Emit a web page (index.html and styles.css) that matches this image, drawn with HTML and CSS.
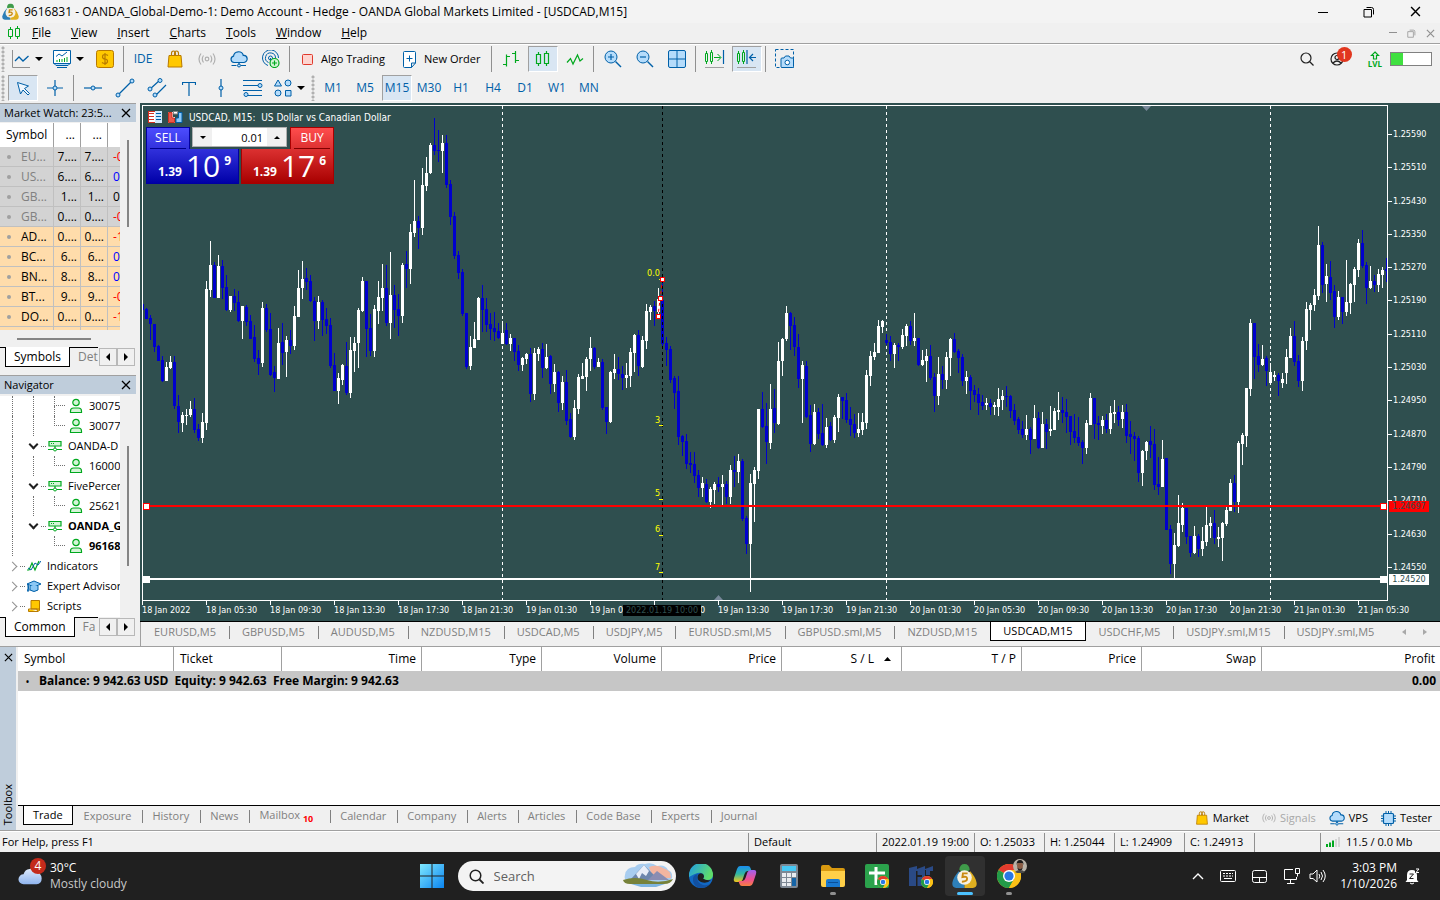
FILE: index.html
```html
<!DOCTYPE html>
<html lang="en">
<head>
    <meta charset="UTF-8">
    <meta name="viewport" content="width=device-width, initial-scale=1.0">
    <title>9616831 - OANDA_Global-Demo-1: Demo Account - Hedge</title>
    <link rel="stylesheet" href="styles.css">
</head>
<body>

    <!-- Icons used more than once -->
    <svg class="sprite" aria-hidden="true">
        <symbol id="i-down" viewBox="0 0 8 4"><path d="M0 0h8L4 4z" fill="#000"/></symbol>
        <symbol id="i-bag" viewBox="0 0 18 18"><path d="M5.500 6V3.500Q5.500 1 7.500 1t2 2.500V6M8.500 6V3.500Q8.500 1 10.500 1t2 2.500V6" fill="none" stroke="#b87a00" stroke-width="1.200"/><path d="M3 5.500h12l1 11.500H2z" fill="#ffc800" stroke="#b87a00"/></symbol>
        <symbol id="i-signal" viewBox="0 0 18 18"><g fill="none" stroke="#b0b0b0" stroke-width="1.200"><circle cx="9" cy="9" r="1.800"/><path d="M5.500 5.500q-2.500 3.500 0 7M12.500 5.500q2.500 3.500 0 7M3 3.500q-4 5.500 0 11M15 3.500q4 5.500 0 11"/></g></symbol>
        <symbol id="i-cloud" viewBox="0 0 18 18"><path d="M4 12.500a3.200 3.200 0 0 1-.5-6.300 5 5 0 0 1 9.800-.7 3.500 3.500 0 0 1 .7 7z" fill="#b5dcfb" stroke="#0060a8" stroke-width="1.200"/><path d="M9 12.500v2M1.500 15.500h5M11 15.500h5" stroke="#0060a8" stroke-width="1.200"/><circle cx="9" cy="15.500" r="1.500" fill="#b5dcfb" stroke="#0060a8"/></symbol>
        <symbol id="i-user" viewBox="0 0 14 16"><g fill="#d5f5d8" stroke="#00a81e" stroke-width="1.200"><circle cx="7" cy="4.500" r="3.200"/><path d="M1.500 14.500v-1.500q0-3 3-3h5q3 0 3 3v1.500z"/></g></symbol>
        <symbol id="i-server" viewBox="0 0 14 12"><path d="M1 1.500h12v4.500H1z" fill="#d5f5d8" stroke="#00a81e" stroke-width="1.200"/><path d="M3 3.500h1M5 3.500h1M0 9.500h5.500M8.500 9.500H14M7 6v2" stroke="#00a81e" stroke-width="1.200"/><circle cx="7" cy="9.500" r="1.500" fill="#fff" stroke="#00a81e"/></symbol>
        <symbol id="i-x" viewBox="0 0 10 10"><path d="M1 1l8 8M9 1L1 9" stroke="currentColor" stroke-width="1.300" fill="none"/></symbol>
        <symbol id="i-restore" viewBox="0 0 12 12"><path d="M1 3.500h7.500v7.500H1zM3.500 1.500h5q2 0 2 2v5" fill="none" stroke="currentColor"/></symbol>
        <symbol id="i-chrome" viewBox="0 0 24 24"><circle cx="12" cy="12" r="12" fill="#fbc116"/><path d="M12 12L1.600 6A12 12 0 0 1 22.400 6z" fill="#e33b2e"/><path d="M12 12L1.600 6A12 12 0 0 0 12 24l5-9z" fill="#229b48"/><path d="M12 6h10.400A12 12 0 0 1 12 24l5.200-9z" fill="#fbc116"/><circle cx="12" cy="12" r="6" fill="#fff"/><circle cx="12" cy="12" r="4.600" fill="#2a78e4"/></symbol>
        <symbol id="i-mt5" viewBox="0 0 24 24"><path d="M12 0q4.500 0 5 5.500l-5 5-5-5Q7.500 0 12 0z" fill="#3f9b4a"/><path d="M6.500 7l5.500 5v11H4q-4.500-.5-3.500-5.500T6.500 7z" fill="#2d7fb8"/><path d="M17.500 7L12 12v11h8q4.500-.5 3.500-5.500T17.500 7z" fill="#e0b020"/><circle cx="12" cy="13" r="7" fill="#f6f1e2"/><path d="M15 9h-4.500l-.5 3.500q4.500-1 4.500 1.700T9.500 17" fill="none" stroke="#c98a10" stroke-width="1.800"/></symbol>
    </svg>

    <header class="titlebar">
        <svg class="app-icon" viewBox="0 0 24 24"><use href="#i-mt5"/></svg>
        <h1>9616831 - OANDA_Global-Demo-1: Demo Account - Hedge - OANDA Global Markets Limited - [USDCAD,M15]</h1>
        <div class="win-buttons">
            <button aria-label="Minimize"><svg width="12" height="12"><path d="M1 6.500h10" stroke="#000"/></svg></button>
            <button aria-label="Restore"><svg width="12" height="12"><use href="#i-restore"/></svg></button>
            <button aria-label="Close"><svg width="11" height="11"><use href="#i-x"/></svg></button>
        </div>
    </header>

    <nav class="menubar">
        <svg width="12" height="14" viewBox="0 0 12 14"><path d="M.5 3.500h4v7h-4zM2.500 1v2.500M2.500 10.500V13M7.500 2.500h4v8h-4zM9.500 0v2.500M9.500 10.500V13" fill="none" stroke="#00a81e"/></svg>
        <button><u>F</u>ile</button>
        <button><u>V</u>iew</button>
        <button><u>I</u>nsert</button>
        <button><u>C</u>harts</button>
        <button><u>T</u>ools</button>
        <button><u>W</u>indow</button>
        <button><u>H</u>elp</button>
        <div class="child-buttons">
            <button aria-label="Minimize chart"><svg width="10" height="10"><path d="M1 4.500h8" stroke="currentColor"/></svg></button>
            <button aria-label="Restore chart"><svg width="9" height="9"><use href="#i-restore"/></svg></button>
            <button aria-label="Close chart"><svg width="9" height="9"><use href="#i-x"/></svg></button>
        </div>
    </nav>

    <div class="toolbars">
        <div class="toolbar">
            <i class="grip"></i>
            <button class="tool combo" aria-label="Chart"><svg width="18" height="18"><path d="M.5 0v17.500H18" fill="none" stroke="#909090"/><path d="M3 11l4-4 4 4 5.500-5" fill="none" stroke="#0060a8" stroke-width="1.300"/></svg><svg width="8" height="4"><use href="#i-down"/></svg></button>
            <button class="tool combo" aria-label="Templates"><svg width="18" height="18"><path d="M.5.500h17v13H.5z" fill="#fff" stroke="#0060a8"/><path d="M1 13.500h16l-2 2H3zM4 17.500h10" fill="#b5dcfb" stroke="#0060a8"/><path d="M3 6.500l3-2.500 3 2 5-4" fill="none" stroke="#0060a8"/><path d="M4 12v-2M6.500 12V9M9 12v-3M11.500 12V8M14 12V7" stroke="#00a81e"/></svg><svg width="8" height="4"><use href="#i-down"/></svg></button>
            <button class="tool" aria-label="Symbols"><svg width="18" height="18"><rect x=".5" y=".5" width="17" height="17" rx="2" fill="#ffc800" stroke="#b87a00"/><path d="M12 5.500Q10.500 4.500 9 4.500 6.500 4.500 6.500 6.700T9 9t2.500 2.300T9 13.500q-1.800 0-3-1M9 3v12" fill="none" stroke="#b87a00" stroke-width="1.200"/></svg></button>
            <i class="sep"></i>
            <button class="tool tf">IDE</button>
            <button class="tool" aria-label="Market"><svg width="18" height="18"><use href="#i-bag"/></svg></button>
            <button class="tool" aria-label="Signals"><svg width="18" height="18"><use href="#i-signal"/></svg></button>
            <button class="tool" aria-label="VPS"><svg width="18" height="18"><use href="#i-cloud"/></svg></button>
            <button class="tool" aria-label="Network"><svg width="18" height="18"><g fill="none" stroke="#0060a8"><path d="M6 15.500A8 8 0 1 1 16.500 8"/><path d="M6.500 12.500A5 5 0 1 1 13.500 8"/><circle cx="8.500" cy="8" r="2"/></g><path d="M8.500 8v8" stroke="#0060a8"/><circle cx="12.500" cy="13" r="4.500" fill="#d5f5d8" stroke="#00a81e" stroke-width="1.200"/><path d="M12.500 10.500v5M10 13h5" stroke="#00a81e" stroke-width="1.200"/></svg></button>
            <i class="sep"></i>
            <button class="tool wide"><svg width="11" height="11"><rect x=".5" y=".5" width="10" height="10" rx="1" fill="#fdd5d0" stroke="#e0392b"/></svg>Algo Trading</button>
            <button class="tool wide"><svg width="13" height="17"><path d="M1.500.5h10q1 0 1 1V12L8.500 16.500h-7q-1 0-1-1v-14q0-1 1-1zM12.500 12h-4v4.500" fill="#fff" stroke="#0060a8"/><path d="M6.500 4.500v6M3.500 7.500h6" stroke="#0060a8"/></svg>New Order</button>
            <i class="sep"></i>
            <button class="tool" aria-label="Bar chart"><svg width="18" height="18"><path d="M4.500 4.500v12M1 14.500h3.500M4.500 6.500H8M13.500 1v12M10 3.500h3.500M13.500 10.500H17" stroke="#00a81e" stroke-width="1.200" fill="none"/></svg></button>
            <button class="tool on" aria-label="Candlesticks"><svg width="16" height="18"><path d="M1.500 4.500h4v9h-4zM3.500 2v2.500M3.500 13.500V16M9.500 3.500h4v10h-4zM11.500 1v2.500M11.500 13.500V16" fill="none" stroke="#00a81e" stroke-width="1.200"/></svg></button>
            <button class="tool" aria-label="Line chart"><svg width="18" height="18"><path d="M1 12.500l3.500-4L7 14l4.500-9 2.500 6 3-2.500" fill="none" stroke="#00a81e" stroke-width="1.200"/></svg></button>
            <i class="sep"></i>
            <button class="tool" aria-label="Zoom in"><svg width="18" height="18"><circle cx="7" cy="7" r="6" fill="#b5dcfb" stroke="#0060a8"/><path d="M4 7h6M7 4v6" stroke="#0060a8" stroke-width="1.200"/><path d="M11.500 11.500l5.500 5.500" stroke="#0060a8" stroke-width="1.400"/></svg></button>
            <button class="tool" aria-label="Zoom out"><svg width="18" height="18"><circle cx="7" cy="7" r="6" fill="#b5dcfb" stroke="#0060a8"/><path d="M4 7h6" stroke="#0060a8" stroke-width="1.200"/><path d="M11.500 11.500l5.500 5.500" stroke="#0060a8" stroke-width="1.400"/></svg></button>
            <button class="tool" aria-label="Tile windows"><svg width="18" height="18"><rect x=".5" y=".5" width="17" height="17" rx="1.500" fill="#b5dcfb" stroke="#0060a8"/><path d="M9 1v16M1 9h16" stroke="#0060a8"/></svg></button>
            <i class="sep"></i>
            <button class="tool" aria-label="Auto scroll"><svg width="20" height="20"><path d="M.5 4.500h2v8h-2zM1.500 2v2.500M1.500 12.500V15M5.500 3.500h2v9h-2zM6.500 1v2.500M6.500 12.500V15M9 8.500h6.500M12.500 5l3.500 3.500L12.500 12" fill="none" stroke="#00a81e"/><path d="M18.500 1v14" stroke="#0060a8" stroke-width="1.200"/><path d="M0 18.500h19" stroke="#a0a0a0"/></svg></button>
            <button class="tool on" aria-label="Chart shift"><svg width="20" height="20"><path d="M.5 4.500h2v8h-2zM1.500 2v2.500M1.500 12.500V15M5.500 3.500h2v9h-2zM6.500 1v2.500M6.500 12.500V15" fill="none" stroke="#00a81e"/><path d="M10 1v14M19 8.500h-6.500M16 5l-3.500 3.500L16 12" fill="none" stroke="#0060a8" stroke-width="1.200"/><path d="M0 18.500h19" stroke="#a0a0a0"/></svg></button>
            <i class="sep"></i>
            <button class="tool" aria-label="Screenshot"><svg width="20" height="20"><rect x=".5" y=".5" width="18" height="18" fill="none" stroke="#0060a8" stroke-dasharray="3 2"/><path d="M6 10q0-1 1-1h2l1.500-2h3.500l1.500 2h2q1 0 1 1v7.500q0 1-1 1H7q-1 0-1-1z" fill="#b5dcfb" stroke="#0060a8"/><circle cx="12.300" cy="13.500" r="2.300" fill="#fff" stroke="#0060a8"/></svg></button>
            <div class="account">
                <button aria-label="Search"><svg width="14" height="14"><circle cx="6" cy="6" r="5" fill="none" stroke="#202020" stroke-width="1.200"/><path d="M9.500 9.500L13.500 13.500" stroke="#202020" stroke-width="1.200"/></svg></button>
                <button class="profile" aria-label="Profile"><svg width="14" height="14"><g fill="none" stroke="#202020" stroke-width="1.200"><circle cx="7" cy="7" r="6"/><circle cx="7" cy="5.500" r="2"/><path d="M3 11q4-4 8 0"/></g></svg><span class="badge">1</span></button>
                <button class="lvl" aria-label="Level"><svg width="10" height="9"><path d="M5 1l3.500 3.500h-2v3.500h-3V4.500h-2z" fill="none" stroke="#00a81e" stroke-width="1.200"/></svg><span>LVL</span></button>
                <div class="meter"><i></i></div>
            </div>
        </div>
        <div class="toolbar">
            <i class="grip"></i>
            <button class="tool on" aria-label="Cursor"><svg width="18" height="18"><path d="M3.500 3.500l11 3.500-4 2.500 5 5-1.500 1.500-5-5L6.500 15z" fill="#eef6fd" stroke="#0060a8"/></svg></button>
            <button class="tool" aria-label="Crosshair"><svg width="18" height="18"><path d="M9 1v6M9 11v6M1 9h6M11 9h6" stroke="#0060a8" stroke-width="1.200"/><circle cx="9" cy="9" r="2" fill="#b5dcfb" stroke="#0060a8"/></svg></button>
            <i class="sep"></i>
            <button class="tool" aria-label="Horizontal line"><svg width="18" height="18"><path d="M0 9h18" stroke="#0060a8" stroke-width="1.200"/><circle cx="9" cy="9" r="2" fill="#b5dcfb" stroke="#0060a8"/></svg></button>
            <button class="tool" aria-label="Trendline"><svg width="20" height="20"><path d="M2 18L18 2" stroke="#0060a8" stroke-width="1.200"/><g fill="#b5dcfb" stroke="#0060a8"><circle cx="3" cy="17" r="2"/><circle cx="17" cy="3" r="2"/></g></svg></button>
            <button class="tool" aria-label="Channel"><svg width="20" height="20"><path d="M2 12L13 2M8 18L19 7" stroke="#0060a8" stroke-width="1.200"/><g fill="#b5dcfb" stroke="#0060a8"><circle cx="3" cy="11" r="2"/><circle cx="13" cy="2.500" r="2"/><circle cx="8" cy="17" r="2"/></g></svg></button>
            <button class="tool" aria-label="Text"><svg width="14" height="15"><path d="M.5 4V1.500h13V4M7 1.500V15" fill="none" stroke="#0060a8" stroke-width="1.200"/></svg></button>
            <button class="tool" aria-label="Vertical line"><svg width="18" height="18"><path d="M9 0v18" stroke="#0060a8" stroke-width="1.200"/><circle cx="9" cy="9" r="2" fill="#b5dcfb" stroke="#0060a8"/></svg></button>
            <button class="tool" aria-label="Fibonacci"><svg width="20" height="18"><path d="M0 1.500h19M0 6.500h16M0 11.500h19M3 16.500h16" stroke="#0060a8"/><g fill="#b5dcfb" stroke="#0060a8"><circle cx="17" cy="6.500" r="2"/><circle cx="3" cy="15.500" r="2"/></g></svg></button>
            <button class="tool combo" aria-label="Shapes"><svg width="18" height="18"><g fill="#b5dcfb" stroke="#0060a8"><path d="M4 1l3.500 6h-7z"/><circle cx="14" cy="4" r="3"/><circle cx="4" cy="14" r="3"/><path d="M11.500 11.500h5.500v5.500h-5.500z"/></g></svg><svg width="8" height="4"><use href="#i-down"/></svg></button>
            <i class="grip"></i>
            <button class="tool tf">M1</button>
            <button class="tool tf">M5</button>
            <button class="tool tf on">M15</button>
            <button class="tool tf">M30</button>
            <button class="tool tf">H1</button>
            <button class="tool tf">H4</button>
            <button class="tool tf">D1</button>
            <button class="tool tf">W1</button>
            <button class="tool tf">MN</button>
        </div>
    </div>

    <main class="workspace">
        <aside class="dock">
            <section class="panel watch">
                <h2>Market Watch: 23:5...<button aria-label="Close Market Watch"><svg width="10" height="10"><use href="#i-x"/></svg></button></h2>
                <div class="scroll">
                    <div class="view">
                        <table>
                            <colgroup><col class="c-name"><col class="c-num"><col class="c-num"><col class="c-num"></colgroup>
                            <thead><tr><th>Symbol</th><th>...</th><th>...</th><th></th></tr></thead>
                            <tbody>
                                <tr class="off"><td>EU...</td><td>7....</td><td>7....</td><td class="neg">-0</td></tr>
                                <tr class="off"><td>US...</td><td>6....</td><td>6....</td><td class="pos">0</td></tr>
                                <tr class="off"><td>GB...</td><td>1...</td><td>1...</td><td>0</td></tr>
                                <tr class="off"><td>GB...</td><td>0....</td><td>0....</td><td class="neg">-0</td></tr>
                                <tr><td>AD...</td><td>0....</td><td>0....</td><td class="neg">-1</td></tr>
                                <tr><td>BC...</td><td>6...</td><td>6...</td><td class="pos">0</td></tr>
                                <tr><td>BN...</td><td>8...</td><td>8...</td><td class="pos">0</td></tr>
                                <tr><td>BT...</td><td>9...</td><td>9...</td><td class="neg">-0</td></tr>
                                <tr><td>DO...</td><td>0....</td><td>0....</td><td class="neg">-1</td></tr>
                                <tr class="more"><td></td><td></td><td></td><td></td></tr>
                            </tbody>
                        </table>
                    </div>
                    <i class="bar"></i>
                </div>
                <i class="hbar"></i>
                <div class="dock-tabs">
                    <button class="active">Symbols</button><button>Det</button>
                    <span class="arrows"><button aria-label="Previous"><svg width="4" height="8"><path d="M4 0v8L0 4z"/></svg></button><button aria-label="Next"><svg width="4" height="8"><path d="M0 0v8l4-4z"/></svg></button></span>
                </div>
            </section>

            <section class="panel navigator">
                <h2>Navigator<button aria-label="Close Navigator"><svg width="10" height="10"><use href="#i-x"/></svg></button></h2>
                <div class="scroll">
                    <ul class="view tree">
                        <li><i class="g line"></i><i class="g line"></i><i class="b through"></i><svg width="14" height="16"><use href="#i-user"/></svg><span>30075</span></li>
                        <li><i class="g line"></i><i class="g line"></i><i class="b"></i><svg width="14" height="16"><use href="#i-user"/></svg><span>30077</span></li>
                        <li><i class="g line"></i><i class="chev open"></i><i class="d"></i><svg width="14" height="12"><use href="#i-server"/></svg><span>OANDA-D</span></li>
                        <li><i class="g line"></i><i class="g line"></i><i class="b"></i><svg width="14" height="16"><use href="#i-user"/></svg><span>16000</span></li>
                        <li><i class="g line"></i><i class="chev open"></i><i class="d"></i><svg width="14" height="12"><use href="#i-server"/></svg><span>FivePercent</span></li>
                        <li><i class="g line"></i><i class="g line"></i><i class="b"></i><svg width="14" height="16"><use href="#i-user"/></svg><span>25621</span></li>
                        <li class="bold"><i class="g line"></i><i class="chev open"></i><i class="d"></i><svg width="14" height="12"><use href="#i-server"/></svg><span>OANDA_G</span></li>
                        <li class="bold"><i class="g line"></i><i class="g"></i><i class="b"></i><svg width="14" height="16"><use href="#i-user"/></svg><span>96168</span></li>
                        <li><i class="chev"></i><i class="d"></i><svg width="14" height="14"><path d="M0 11h2l3-7 3 7 4-9" fill="none" stroke="#00a81e" stroke-width="1.200"/><path d="M1 9l3 2 4-7 3 2 3-4" fill="none" stroke="#0060a8"/></svg><span>Indicators</span></li>
                        <li><i class="chev"></i><i class="d"></i><svg width="14" height="14"><path d="M0 5l7-3 7 3-7 3z" fill="#8cc8f5" stroke="#0060a8"/><path d="M3 7v4q4 3 8 0V7M1 5v5l-1 2h2z" fill="#8cc8f5" stroke="#0060a8"/></svg><span>Expert Advisors</span></li>
                        <li><i class="chev"></i><i class="d"></i><svg width="14" height="14"><path d="M4 1.500h8.500V10H4zM1.500 10H10v1.500q1 1.500 2.500 0V10M1.500 10v2.500h9.500" fill="#ffc800" stroke="#b87a00"/></svg><span>Scripts</span></li>
                    </ul>
                    <i class="bar"></i>
                </div>
                <div class="dock-tabs">
                    <button class="active">Common</button><button>Fa</button>
                    <span class="arrows"><button aria-label="Previous"><svg width="4" height="8"><path d="M4 0v8L0 4z"/></svg></button><button aria-label="Next"><svg width="4" height="8"><path d="M0 0v8l4-4z"/></svg></button></span>
                </div>
            </section>
        </aside>

        <section class="charts">
            <div class="chart">
                <div class="plot">
                    <svg id="plot" width="100%" height="100%"></svg>
                    <div class="caption">
                        <svg width="14" height="12"><path d="M0 0h7v12H0z" fill="#fff"/><path d="M7 0h7v12H7z" fill="#cfe8fb"/><path d="M1 2.500h5M1 5.500h5M1 8.500h5" stroke="#d03020"/><path d="M8 2.500h5M8 5.500h5M8 8.500h5" stroke="#0060a8"/><path d="M.5.5H7M.5 11.500H7M.5 0v12" fill="none" stroke="#d03020"/></svg>
                        <svg width="15" height="12"><path d="M0 1h5v5h2v6H0z" fill="#fff"/><path d="M.5 1.500H4V7h2.500v4.500h-6z" fill="#e8594c" stroke="#d03020"/><path d="M8 7h2.500V1.500H14v10H8z" fill="#8cc8f5" stroke="#0060a8"/><path d="M5.500.5h4V3h-4z" fill="#fff" stroke="#888"/></svg>
                        <span>USDCAD, M15:&nbsp; US Dollar vs Canadian Dollar</span>
                    </div>
                    <div class="deal">
                        <button class="side sell"><span class="name">SELL</span><span class="price"><b>1.39</b><big>10</big><sup>9</sup></span></button>
                        <button class="side buy"><span class="name">BUY</span><span class="price"><b>1.39</b><big>17</big><sup>6</sup></span></button>
                        <div class="volume">
                            <button aria-label="Decrease"><svg width="6" height="3"><path d="M0 0h6L3 3z"/></svg></button>
                            <input type="text" value="0.01" aria-label="Volume">
                            <button aria-label="Increase"><svg width="6" height="3"><path d="M0 3h6L3 0z"/></svg></button>
                        </div>
                    </div>
                </div>
                <ol class="price-axis" id="prices"></ol>
                <span class="mark red">1.24697</span>
                <span class="mark white">1.24520</span>
                <ol class="time-axis" id="times"></ol>
                <span class="mark cursor-time">2022.01.19 10:00</span>
            </div>
            <div class="chart-tabs">
                <button>EURUSD,M5</button>
                <button>GBPUSD,M5</button>
                <button>AUDUSD,M5</button>
                <button>NZDUSD,M15</button>
                <button>USDCAD,M5</button>
                <button>USDJPY,M5</button>
                <button>EURUSD.sml,M5</button>
                <button>GBPUSD.sml,M5</button>
                <button>NZDUSD,M15</button>
                <button class="active">USDCAD,M15</button>
                <button>USDCHF,M5</button>
                <button>USDJPY.sml,M15</button>
                <button>USDJPY.sml,M5</button>
                <span class="tab-scroll"><svg width="4" height="6"><path d="M4 0v6L0 3z"/></svg><svg width="4" height="6"><path d="M0 0v6l4-3z"/></svg></span>
            </div>
        </section>
    </main>

    <section class="toolbox">
        <div class="toolbox-side">
            <button aria-label="Close Toolbox"><svg width="9" height="9"><use href="#i-x"/></svg></button>
            <h2>Toolbox</h2>
        </div>
        <div class="toolbox-main">
            <table class="trades">
                <colgroup><col class="t-symbol"><col class="t-ticket"><col class="t-time"><col class="t-col"><col class="t-col"><col class="t-col"><col class="t-col"><col class="t-col"><col class="t-col"><col class="t-col"><col></colgroup>
                <thead>
                    <tr><th>Symbol</th><th>Ticket</th><th>Time</th><th>Type</th><th>Volume</th><th>Price</th><th class="sorted">S / L<svg width="7" height="4"><path d="M0 4h7L3.500 0z"/></svg></th><th>T / P</th><th>Price</th><th>Swap</th><th>Profit</th></tr>
                </thead>
                <tbody>
                    <tr><td colspan="10">Balance: 9 942.63 USD&nbsp; Equity: 9 942.63&nbsp; Free Margin: 9 942.63</td><td>0.00</td></tr>
                </tbody>
            </table>
            <div class="toolbox-tabs">
                <button class="active">Trade</button>
                <button>Exposure</button>
                <button>History</button>
                <button>News</button>
                <button class="mail">Mailbox <sub>10</sub></button>
                <button>Calendar</button>
                <button>Company</button>
                <button>Alerts</button>
                <button>Articles</button>
                <button>Code Base</button>
                <button>Experts</button>
                <button>Journal</button>
                <div class="services">
                    <button><svg width="14" height="14"><use href="#i-bag"/></svg>Market</button>
                    <button disabled><svg width="14" height="14"><use href="#i-signal"/></svg>Signals</button>
                    <button><svg width="16" height="16"><use href="#i-cloud"/></svg>VPS</button>
                    <button><svg width="15" height="15"><rect x="2.500" y="2.500" width="10" height="10" rx="1" fill="#b5dcfb" stroke="#0060a8" stroke-width="1.200"/><path d="M5 0v2M7.500 0v2M10 0v2M5 13v2M7.500 13v2M10 13v2M0 5h2M0 7.500h2M0 10h2M13 5h2M13 7.500h2M13 10h2" stroke="#0060a8"/></svg>Tester</button>
                </div>
            </div>
        </div>
    </section>

    <footer class="statusbar">
        <span class="help">For Help, press F1</span>
        <span class="profile-name">Default</span>
        <span class="date">2022.01.19 19:00</span>
        <span>O: 1.25033</span>
        <span>H: 1.25044</span>
        <span>L: 1.24909</span>
        <span>C: 1.24913</span>
        <span class="blank"></span>
        <span class="traffic"><svg width="14" height="10"><path d="M1 7v3M4 5.500V10M7 3.500V10" stroke="#00a81e" stroke-width="2"/><path d="M10 2v8M13 0v10" stroke="#d4d4d4" stroke-width="2"/></svg>11.5 / 0.0 Mb</span>
    </footer>

    <div class="taskbar">
        <div class="weather">
            <div class="weather-icon">
                <svg width="26" height="22" viewBox="0 0 28 22"><defs><linearGradient id="cl" x2="0" y2="1"><stop offset="0" stop-color="#dce9fb"/><stop offset="1" stop-color="#8fb4ee"/></linearGradient></defs><circle cx="18" cy="7" r="6" fill="#f59a1c"/><path d="M6 20a5.500 5.500 0 0 1 0-11 7.500 7.500 0 0 1 14-1.500A6.300 6.300 0 0 1 20 20z" fill="url(#cl)"/></svg>
                <span class="alert">4</span>
            </div>
            <p>30°C<br><span>Mostly cloudy</span></p>
        </div>
        <div class="apps">
            <button aria-label="Start"><svg width="24" height="24"><defs><linearGradient id="wn" x2="1" y2="1"><stop offset="0" stop-color="#7fe8ff"/><stop offset="1" stop-color="#0a84f0"/></linearGradient></defs><path d="M0 0h11.500v11.500H0zM12.500 0H24v11.500H12.500zM0 12.500h11.500V24H0zM12.500 12.500H24V24H12.500z" fill="url(#wn)"/></svg></button>
            <label class="search">
                <svg width="15" height="15"><circle cx="6.500" cy="6.500" r="5.300" fill="none" stroke="#202020" stroke-width="1.500"/><path d="M10.500 10.500l4 4" stroke="#202020" stroke-width="1.800"/></svg>
                <input type="text" placeholder="Search" aria-label="Search">
                <svg width="50" height="26" viewBox="0 0 50 26"><path d="M2 12Q3 4 12 4q3-4 10-3 7-2 12 2 8-2 11 4 5 2 4 8-3 5-10 5H8Q0 18 2 12z" fill="#a8cdf0"/><path d="M26 4q8-3 14 1 8 2 8 10H30z" fill="#f3b5a0"/><path d="M7 17L21 2l15 15z" fill="#6d87ad"/><path d="M21 2l5 6-3 5-4-3-3 6-3-5z" fill="#e8eef8"/><path d="M25 17l9-9 12 9z" fill="#8a8db2"/><path d="M0 17q12-4 24 0t26-1q-2 5-9 5H7q-6 0-7-4z" fill="#77823a"/><path d="M8 21h34l-9 3H18z" fill="#7db4e0"/></svg>
            </label>
            <button aria-label="Edge"><svg width="24" height="24" viewBox="0 0 24 24"><defs><linearGradient id="ed" x1="0" x2="1" y2=".4"><stop offset="0" stop-color="#1f9be8"/><stop offset="1" stop-color="#5fdc6a"/></linearGradient></defs><circle cx="12" cy="12" r="12" fill="#1168c4"/><path d="M0 11A12 12 0 0 1 24 11q0 5-6 5-3 0-4-1.500 2-2 0-4.500-2-2-5.500-1T0 13z" fill="url(#ed)"/><path d="M8 13q0 6 6 8 5 1 8-2-4 5-10 5Q5 23 4 17t5-7q-1 1-1 3z" fill="#1250a0"/><path d="M14 14.500q2-2 0-4.500-3-2-5 1-2 5 3 7 6 2 10-2-5 1-8-1.500z" fill="#202020"/></svg></button>
            <button aria-label="Copilot"><svg width="24" height="24" viewBox="0 0 24 24"><defs><linearGradient id="c1" x2="0" y2="1"><stop offset="0" stop-color="#1a8df0"/><stop offset=".5" stop-color="#30b8a0"/><stop offset="1" stop-color="#f5c518"/></linearGradient><linearGradient id="c2" x2="0" y2="1"><stop offset="0" stop-color="#a060f0"/><stop offset=".6" stop-color="#f05090"/><stop offset="1" stop-color="#f58040"/></linearGradient></defs><path d="M7 2h8q2 0 2.500 2l1 3h-4q-2 0-3 3l-2 6q-1 2-4 2H3q-3 0-2-4L4 5q1-3 3-3z" fill="url(#c1)"/><path d="M17 22H9q-2 0-2.500-2l-1-3h4q2 0 3-3l2-6q1-2 4-2H21q3 0 2 4l-3 9q-1 3-3 3z" fill="url(#c2)"/></svg></button>
            <button aria-label="Calculator"><svg width="20" height="24"><rect x="1" width="18" height="24" rx="2" fill="#7d8894"/><path d="M3 2h14v5H3z" fill="#47c8f5"/><path d="M3 9h4v4H3zM8 9h4v4H8zM13 9h4v4h-4zM3 14h4v4H3zM8 14h4v4H8zM3 19h4v3H3zM8 19h4v3H8z" fill="#e8ecf0"/><path d="M13 14h4v8h-4z" fill="#1565a8"/></svg></button>
            <button class="running" aria-label="File Explorer"><svg width="26" height="24"><path d="M1 3q0-2 2-2h6l3 3h11q2 0 2 2v6H1z" fill="#d99a10"/><path d="M1 7h24v14q0 2-2 2H3q-2 0-2-2z" fill="#ffcf48"/><path d="M6 23v-6q0-2 2-2h10q2 0 2 2v6z" fill="#1878d0"/><path d="M8 18.500h10" stroke="#0a4f98"/></svg></button>
            <button aria-label="Sheets"><svg width="26" height="26"><rect x="1" y="1" width="24" height="24" rx="2" fill="#2ba24c"/><path d="M12 4v18M5 10h16" stroke="#fff" stroke-width="3"/><svg x="13" y="13" width="12" height="12"><use href="#i-chrome"/></svg></svg></button>
            <button aria-label="Web app"><svg width="26" height="26"><path d="M1 5l8-2v3l8-3v3l8-3v5h-3v15H1zM1 12h8M9 6v5" fill="#2a4a86"/><path d="M8 8h1.500v4H14v2H9.500v11H8zM17 7h1v5h4v1.500h-4V18h-1z" fill="#202020"/><svg x="13" y="13" width="12" height="12"><use href="#i-chrome"/></svg></svg></button>
            <button class="current" aria-label="MetaTrader 5"><svg width="25" height="25"><use href="#i-mt5"/></svg></button>
            <button class="running" aria-label="Chrome"><svg width="24" height="24"><use href="#i-chrome"/></svg><svg class="avatar" width="14" height="14"><circle cx="7" cy="7" r="7" fill="#b9b3a8"/><path d="M2 13q5-4 10 0-5 3-10 0z" fill="#4a4a48"/><ellipse cx="7" cy="6.500" rx="3" ry="3.800" fill="#8a5d45"/><path d="M3.500 6q0-5 3.500-5t3.500 5L9.500 4h-5zM4.500 8.500Q7 12 9.500 8.500q0 3-2.500 3t-2.500-3z" fill="#1c1a1a"/></svg></button>
        </div>
        <div class="tray">
            <svg width="12" height="7"><path d="M1 6l5-5 5 5" fill="none" stroke="#fff" stroke-width="1.400"/></svg>
            <svg width="16" height="12"><rect x=".5" y=".5" width="15" height="11" rx="1" fill="none" stroke="#fff"/><path d="M3 3.500h2M6 3.500h2M9 3.500h2M12 3.500h1M3 6h2M6 6h2M9 6h2M12 6h1M4 8.500h8" stroke="#fff"/></svg>
            <svg width="15" height="13"><rect x=".5" y=".5" width="14" height="12" rx="2" fill="none" stroke="#fff"/><path d="M1 7.500h13M7.500 7.500V12" stroke="#fff"/></svg>
            <svg width="18" height="17"><path d="M10 1.500H1.500v10h12V9M7.500 12v3.500M4 15.500h7.500M12.500.5h4v5h-4zM14.500 5.500v3" fill="none" stroke="#fff"/></svg>
            <svg width="17" height="14"><path d="M1 5h3l4-4v12L4 9.500H1zM10 5q1.500 2 0 4.500M12 3q3 4 0 8M14 1q4.500 6 0 12" fill="none" stroke="#fff"/></svg>
            <p class="clock">3:03 PM<br>1/10/2026</p>
            <svg width="15" height="17"><path d="M2 12V7q0-5 5-5 4.500 0 5 5v5l1.500 2H.5z" fill="#fff"/><path d="M5 15q2 2 4 0" stroke="#fff" fill="none"/><path d="M4.500 6h4l-4 4.500h4" stroke="#202020" fill="none"/><path d="M10 0h5v5h-5z" fill="#202020"/><path d="M11 1h3l-3 3.500h3" stroke="#fff" fill="none"/></svg>
        </div>
    </div>

    <script src="chart.js"></script>
</body>
</html>
```

FILE: styles.css
```css
/* General Styling */
* {
    margin: 0;
    padding: 0;
    box-sizing: border-box;
}

body {
    display: flex;
    flex-direction: column;
    height: 100vh;
    overflow: hidden;
    background: #f0f0f0;
    color: #000;
    font-family: "Open Sans", "Noto Sans", sans-serif;
    font-size: 11px;
    line-height: 16px;
}

button, input {
    font: inherit;
    color: inherit;
    background: none;
    border: none;
}

h1, h2 {
    font-size: 11px;
    font-weight: normal;
}

ul, ol {
    list-style: none;
}

svg {
    display: block;
    flex: none;
}

.sprite {
    position: absolute;
    width: 0;
    height: 0;
}

/* Title bar */
.titlebar {
    display: flex;
    align-items: center;
    height: 23px;
    padding-left: 2px;
    background: #f3f3f3;
}

.titlebar h1 {
    font-size: 12px;
}

.app-icon {
    width: 17px;
    height: 18px;
    margin-right: 5px;
}

.win-buttons {
    display: flex;
    margin-left: auto;
    padding-right: 2px;
}

.win-buttons button {
    display: grid;
    place-items: center;
    width: 46px;
    height: 22px;
}

/* Menu */
.menubar {
    display: flex;
    align-items: center;
    height: 21px;
    padding-left: 8px;
    border-bottom: 1px solid #a0a0a0;
}

.menubar > button {
    margin-left: 12px;
    margin-right: 8px;
    font-size: 12px;
}

.child-buttons {
    display: flex;
    margin-left: auto;
    color: #909090;
}

.child-buttons button {
    display: grid;
    place-items: center;
    width: 19px;
}

/* Toolbars */
.toolbars {
    border-top: 1px solid #fff;
}

.toolbar {
    display: flex;
    height: 29px;
    padding-top: 1px;
}

.grip {
    width: 7px;
    height: 26px;
    flex: none;
    background: radial-gradient(circle at 3px 2px, #b0b0b0 1px, transparent 2px) 0 0 / 7px 4px;
}

.sep {
    width: 6px;
    height: 26px;
    flex: none;
    background: linear-gradient(#909090, #909090) 2px 0 / 1px 100% no-repeat;
}

.tool {
    display: flex;
    align-items: center;
    justify-content: center;
    width: 30px;
    height: 26px;
    margin: 0 1px;
    border: 1px solid transparent;
}

.combo {
    width: 39px;
    gap: 5px;
}

.wide {
    width: auto;
    gap: 8px;
    padding: 0 7px;
}

.tf {
    color: #0060a8;
    font-size: 12px;
}

.tool.on {
    background: #d9e6f3;
    border-color: #a0a0a0 #fff #fff #a0a0a0;
}

.account {
    display: flex;
    align-items: center;
    height: 26px;
    margin-left: auto;
    padding-right: 8px;
    gap: 16px;
}

.profile {
    position: relative;
}

.badge {
    position: absolute;
    top: -5px;
    left: 7px;
    width: 15px;
    height: 15px;
    border-radius: 50%;
    background: #e1371f;
    color: #fff;
    font-size: 11px;
    line-height: 15px;
}

.lvl {
    display: flex;
    flex-direction: column;
    align-items: center;
    padding-left: 8px;
    color: #00a81e;
    font-size: 8px;
    font-weight: bold;
    line-height: 8px;
}

.meter {
    width: 42px;
    height: 14px;
    margin-left: -8px;
    border: 1px solid #808080;
    background: #fff;
}

.meter i {
    display: block;
    width: 30%;
    height: 12px;
    background: #3fe03f;
}

/* Workspace */
.workspace {
    flex: 1;
    display: flex;
    min-height: 0;
}

.dock {
    display: flex;
    flex-direction: column;
    width: 140px;
    padding-right: 4px;
}

.panel {
    display: flex;
    flex-direction: column;
    border-top: 1px solid #a0a0a0;
}

.panel h2 {
    display: flex;
    align-items: center;
    justify-content: space-between;
    height: 18px;
    padding: 0 5px 0 4px;
    background: #bfcddb;
    white-space: nowrap;
}

.panel .scroll {
    display: flex;
    gap: 7px;
    margin-top: 1px;
}

.view {
    width: 120px;
    overflow: hidden;
    background: #fff;
}

.bar {
    width: 2px;
    background: #858585;
}

.hbar {
    width: 74px;
    height: 2px;
    margin: 8px 0 7px 17px;
    background: #858585;
}

/* Market Watch */
.watch .scroll {
    height: 207px;
}

.watch .bar {
    height: 87px;
    margin-top: 17px;
}

.watch table {
    width: 135px;
    table-layout: fixed;
    border-collapse: separate;
    border-spacing: 0;
}

.c-name { width: 54px; }
.c-num { width: 27px; }

.watch th, .watch td {
    height: 20px;
    border-right: 1px solid #c0c0c0;
    border-bottom: 1px solid #c0c0c0;
    padding-right: 3px;
    text-align: right;
    font-weight: normal;
    font-size: 12px;
    white-space: nowrap;
}

.watch th {
    height: 24px;
    border-bottom: 0;
    border-color: #a0a0a0;
    padding-right: 5px;
}

.watch th:first-child {
    padding-left: 6px;
    text-align: left;
}

.watch td {
    background: #ffdcab;
}

.watch .off td {
    background: #d3d3d3;
}

.watch td:first-child {
    padding: 0;
    text-align: left;
}

.watch .off td:first-child {
    color: #808080;
}

.watch td:first-child::before {
    content: '';
    display: inline-block;
    width: 4px;
    height: 4px;
    margin: 0 10px 2px 7px;
    border-radius: 50%;
    background: #a0a0a0;
}

.watch td:last-child {
    padding-left: 5px;
    text-align: left;
}

.watch .neg { color: #f00; }
.watch .pos { color: #00f; }

/* Tabs below docked panels */
.dock-tabs {
    display: flex;
    position: relative;
    height: 23px;
    margin-right: 38px;
    padding-left: 5px;
    background: linear-gradient(#000, #000) 0 0 / 100% 1px no-repeat;
    color: #808080;
    font-size: 12px;
}

.dock-tabs > button {
    height: 20px;
    padding: 0 8px;
}

.dock-tabs > .active {
    background: #fff;
    color: #000;
    border: solid #000;
    border-width: 0 1px 1px 1px;
}

.arrows {
    position: absolute;
    right: -37px;
    top: 1px;
    display: flex;
}

.arrows button {
    display: grid;
    place-items: center;
    width: 18px;
    height: 18px;
    border: 1px solid #b8b8b8;
    background: #f0f0f0;
}

/* Navigator */
.navigator {
    flex: 1;
    margin-top: 5px;
}

.navigator .scroll {
    flex: 1;
    min-height: 0;
    margin-top: 2px;
}

.navigator .bar {
    height: 120px;
    margin-top: 50px;
}

.navigator .dock-tabs {
    height: 29px;
}

.tree li {
    display: flex;
    align-items: center;
    height: 20px;
    padding-left: 12px;
    white-space: nowrap;
}

.tree li > * {
    flex: none;
}

.tree li > span {
    padding-left: 6px;
}

.tree .bold {
    font-weight: bold;
}

.g {
    width: 21px;
    height: 20px;
    border-left: 1px dotted transparent;
}

.g.line {
    border-color: #707070;
}

.b {
    position: relative;
    width: 11px;
    height: 10px;
    margin-right: 4px;
    align-self: flex-start;
    border-left: 1px dotted #707070;
    border-bottom: 1px dotted #707070;
}

.b.through::after {
    content: '';
    position: absolute;
    left: -1px;
    top: 10px;
    height: 10px;
    border-left: 1px dotted #707070;
}

.chev {
    display: grid;
    place-items: center;
    width: 12px;
    height: 12px;
    margin-left: -6px;
}

.chev::before {
    content: '';
    width: 6px;
    height: 6px;
    border: solid #909090;
    border-width: 1px 1px 0 0;
    transform: rotate(45deg);
}

.chev.open::before {
    width: 5px;
    height: 5px;
    border-color: #202020;
    border-width: 2px 2px 0 0;
    transform: translateY(-2px) rotate(135deg);
}

.d {
    width: 5px;
    margin: 0 2px;
    border-top: 1px dotted #707070;
}

/* Chart */
.charts {
    flex: 1;
    min-width: 0;
    display: flex;
    flex-direction: column;
}

.chart {
    flex: 1;
    position: relative;
    display: grid;
    grid-template-columns: minmax(0, 1fr) 52px;
    grid-template-rows: 1fr 20px;
    min-height: 0;
    padding: 2px 0 0 2px;
    background: #2f4f4f;
    border-bottom: 1px solid #000;
    color: #fff;
    font-family: "DejaVu Sans Condensed", "DejaVu Sans", sans-serif;
    font-size: 9px;
    line-height: 11px;
}

.plot {
    position: relative;
    border: 1px solid #fff;
    overflow: hidden;
}

#plot {
    position: absolute;
    inset: 0;
}

.caption {
    position: absolute;
    top: 5px;
    left: 5px;
    display: flex;
    align-items: center;
    gap: 6px;
    font-size: 10px;
    white-space: nowrap;
}

.price-axis {
    display: flex;
    flex-direction: column;
    justify-content: space-between;
    padding: 24px 0 28px;
}

.price-axis li {
    display: flex;
    align-items: center;
}

.price-axis li::before {
    content: '';
    width: 4px;
    height: 1px;
    margin-right: 1px;
    background: #fff;
}

.time-axis {
    display: flex;
    height: 20px;
}

.time-axis li {
    flex: none;
    width: 64px;
    white-space: nowrap;
}

.time-axis li::before {
    content: '';
    display: block;
    width: 1px;
    height: 4px;
    background: #fff;
}

.mark {
    position: absolute;
    right: 11px;
    width: 40px;
    height: 11px;
    text-align: center;
    color: #2f4f4f;
}

.mark.red {
    bottom: 109px;
    background: #f00;
}

.mark.white {
    bottom: 36px;
    background: #fff;
}

.mark.cursor-time {
    left: 483px;
    bottom: 5px;
    width: 78px;
    background: #000;
}

.fibo {
    fill: #ff0;
    font-size: 9px;
}

/* One click trading */
.deal {
    position: absolute;
    top: 21px;
    left: 3px;
    display: flex;
    gap: 2px;
    font-family: "Open Sans", "Noto Sans", sans-serif;
}

.side {
    display: flex;
    flex-direction: column;
    width: 93px;
    color: #fff;
}

.side .name {
    width: 44px;
    height: 22px;
    border: 1px solid;
    border-bottom: 0;
    font-size: 12px;
    line-height: 19px;
}

.side .price {
    display: flex;
    justify-content: center;
    gap: 4px;
    width: 93px;
    height: 35px;
    padding-left: 4px;
    border: 1px solid;
    border-top: 0;
    line-height: 34px;
}

.price b {
    padding-top: 6px;
    font-size: 12px;
}

.price big {
    font-size: 30px;
}

.price sup {
    font-size: 12px;
    font-weight: bold;
    line-height: 24px;
    vertical-align: top;
}

.sell .name, .sell .price { border-color: #0000a0; }
.sell .name { background: linear-gradient(#4d4dff, #3131dc); }
.sell .price { background: linear-gradient(#3131dc, #0000a8); }
.buy { align-items: flex-end; }
.buy .name, .buy .price { border-color: #a80000; }
.buy .name { background: linear-gradient(#ff4d4d, #dc3131); }
.buy .price { background: linear-gradient(#dc3131, #a80000); }

.name::after {
    content: '';
    display: block;
    width: 36px;
    margin: 1px auto 0;
    border-top: 1px solid #00008c;
}

.buy .name::after {
    border-color: #800000;
}

.volume {
    position: absolute;
    left: 46px;
    top: 0;
    display: flex;
    width: 95px;
    height: 20px;
    border: 1px solid #b0b0b0;
    background: #f0f0f0;
}

.volume button {
    display: grid;
    place-items: center;
    width: 19px;
    color: #000;
}

.volume input {
    flex: 1;
    width: 0;
    padding-right: 4px;
    background: #fff;
    color: #000;
    font-size: 11px;
    text-align: right;
}

/* Chart tabs */
.chart-tabs {
    display: flex;
    height: 24px;
    border-left: 1px solid #a0a0a0;
    color: #808080;
}

.chart-tabs button {
    position: relative;
    height: 19px;
    padding: 0 13px;
    white-space: nowrap;
}

.chart-tabs button + button:not(.active)::before,
.toolbox-tabs > button + button:not(:nth-child(2))::before {
    content: '';
    position: absolute;
    left: 0;
    top: 4px;
    height: 13px;
    border-left: 1px solid #808080;
}

.chart-tabs .active {
    padding: 0 12px;
    background: #fff;
    color: #000;
    border: solid #000;
    border-width: 0 1px 1px 1px;
}

.chart-tabs .active + button::before {
    display: none;
}

.tab-scroll {
    display: flex;
    align-items: center;
    gap: 17px;
    height: 20px;
    margin-left: auto;
    padding-right: 13px;
    fill: #a8a8a8;
}

/* Toolbox */
.toolbox {
    display: flex;
    height: 185px;
    border-top: 1px solid #a0a0a0;
    border-bottom: 1px solid #a0a0a0;
}

.toolbox-side {
    display: flex;
    flex-direction: column;
    align-items: center;
    justify-content: space-between;
    width: 16px;
    padding: 6px 0 5px;
    margin-right: 2px;
    background: #bfcddb;
}

.toolbox-side h2 {
    writing-mode: vertical-rl;
    transform: rotate(180deg);
}

.toolbox-main {
    flex: 1;
    display: flex;
    flex-direction: column;
    justify-content: space-between;
    background: #fff;
}

.trades {
    width: 100%;
    table-layout: fixed;
    border-collapse: separate;
    border-spacing: 0;
    font-size: 12px;
}

.t-symbol { width: 156px; }
.t-ticket { width: 108px; }
.t-time { width: 140px; }
.t-col { width: 120px; }

.trades th {
    height: 24px;
    padding: 0 5px;
    border-right: 1px solid #a0a0a0;
    text-align: right;
    font-weight: normal;
}

.trades th:nth-child(-n+2) {
    padding-left: 6px;
    text-align: left;
}

.trades th:last-child {
    border-right: 0;
}

.trades th svg {
    display: inline-block;
    margin: 0 5px 2px 10px;
}

.trades td {
    height: 20px;
    padding-right: 4px;
    background: #c6c6c6;
    font-weight: bold;
    line-height: 18px;
}

.trades td::before {
    content: '•';
    display: inline-block;
    width: 6px;
    padding-left: 8px;
    margin-right: 7px;
    font-size: 8px;
}

.trades td:last-child {
    text-align: right;
}

.trades td:last-child::before {
    display: none;
}

.toolbox-tabs {
    display: flex;
    height: 25px;
    gap: 1px;
    padding-left: 5px;
    border-top: 1px solid #000;
    background: #f0f0f0;
    color: #808080;
}

.toolbox-tabs > button {
    position: relative;
    height: 19px;
    padding: 0 10px;
}

.toolbox-tabs > .active {
    background: #fff;
    color: #000;
    border: solid #000;
    border-width: 0 1px 1px 1px;
    padding: 0 9px;
}

.toolbox-tabs .mail {
    padding-right: 16px;
}

.mail sub {
    color: #f00;
    font-size: 9px;
    font-weight: bold;
    line-height: 9px;
}

.services {
    display: flex;
    margin-left: auto;
    padding-right: 8px;
    gap: 13px;
    color: #000;
}

.services button {
    display: flex;
    align-items: center;
    gap: 4px;
}

.services button:disabled {
    color: #a8a8a8;
}

/* Status bar */
.statusbar {
    display: flex;
    align-items: center;
    height: 21px;
    border-top: 1px solid #fff;
}

.statusbar span {
    width: 70px;
    height: 19px;
    padding-left: 5px;
    border-left: 1px solid #909090;
    line-height: 18px;
    white-space: nowrap;
}

.statusbar .help {
    flex: 1;
    padding-left: 2px;
    border-left: 0;
}

.statusbar .profile-name { width: 128px; }
.statusbar .date { width: 98px; }
.statusbar .blank { width: 66px; }

.statusbar .traffic {
    display: flex;
    align-items: center;
    width: 120px;
    gap: 6px;
}

/* Taskbar */
.taskbar {
    display: grid;
    grid-template-columns: 1fr auto 1fr;
    height: 48px;
    background: #202020;
    color: #fff;
    font-size: 12px;
}

.weather {
    display: flex;
    align-items: center;
    gap: 6px;
    padding-left: 18px;
}

.weather span {
    color: #c8c8c8;
}

.weather-icon {
    position: relative;
}

.weather .alert {
    position: absolute;
    top: -7px;
    left: 12px;
    width: 16px;
    height: 16px;
    border-radius: 50%;
    background: #c42b1c;
    color: #fff;
    text-align: center;
}

.apps {
    display: flex;
    align-items: center;
}

.apps button {
    position: relative;
    display: grid;
    place-items: center;
    width: 44px;
    height: 48px;
}

.search {
    display: flex;
    align-items: center;
    width: 218px;
    height: 30px;
    margin: 0 3px 0 4px;
    padding: 0 3px 0 11px;
    border-radius: 15px;
    background: #f3f3f3;
}

.search input {
    flex: 1;
    width: 0;
    padding-left: 10px;
    font-size: 13px;
}

.search input::placeholder {
    color: #606060;
}

.running::after, .current::after {
    content: '';
    position: absolute;
    bottom: 5px;
    left: 19px;
    width: 6px;
    height: 3px;
    border-radius: 2px;
    background: #909090;
}

.apps .current {
    height: 40px;
    width: 40px;
    margin: 0 2px;
    border-radius: 4px;
    background: #303030;
}

.apps .current::after {
    left: 12px;
    bottom: 1px;
    width: 16px;
    background: #4cc2ff;
}

.avatar {
    position: absolute;
    top: 7px;
    right: 4px;
}

.tray {
    display: flex;
    align-items: center;
    justify-content: flex-end;
    gap: 8px;
    padding-right: 20px;
}

.tray svg:nth-child(-n+3) {
    margin-right: 8px;
}

.clock {
    width: 63px;
    text-align: right;
}
```

FILE: chart.js
```js
// One row per bar: [up, high, body top, body bottom, low], y in pixels
const bars = [
    [0,304,304,310,310],[0,308,309,319,319],[0,315,318,324,340],[0,324,324,347,352],[0,345,346,361,361],[0,356,360,381,382],
    [1,362,367,381,381],[1,356,362,368,369],[0,356,362,406,409],[0,395,406,422,433],[1,412,415,423,432],[1,409,415,416,425],
    [1,401,409,415,417],[0,398,409,430,433],[0,424,429,438,441],[1,413,422,438,443],[1,281,289,423,430],[1,241,265,290,297],
    [0,262,265,298,298],[1,255,266,298,298],[0,260,266,288,299],[0,275,287,310,311],[1,296,296,310,312],[0,289,296,303,311],
    [0,291,302,321,322],[1,306,306,321,339],[0,305,307,322,326],[0,315,321,339,339],[0,325,337,359,362],[0,350,358,364,375],
    [1,302,308,363,367],[0,304,308,330,332],[0,313,329,375,376],[0,366,372,378,392],[1,328,343,379,379],[0,323,342,353,365],
    [1,336,340,352,377],[0,330,340,346,354],[1,306,316,346,350],[1,270,288,317,317],[1,261,279,288,299],[0,268,278,282,290],
    [0,275,281,301,302],[0,297,301,321,341],[1,296,302,321,329],[0,300,302,320,336],[0,308,319,326,334],[0,318,325,366,368],
    [0,353,365,391,391],[1,373,378,391,404],[1,364,365,380,385],[0,342,366,393,395],[1,337,350,393,398],[1,337,343,351,372],
    [1,308,310,343,368],[1,277,281,311,312],[0,281,281,329,357],[0,314,328,351,356],[1,305,309,351,357],[1,281,297,311,324],
    [1,264,288,298,311],[0,265,288,323,326],[1,252,295,323,339],[0,285,295,310,328],[0,294,309,316,336],[1,263,265,316,323],
    [0,251,264,269,288],[1,224,232,269,284],[1,180,221,233,237],[0,216,221,228,249],[1,168,185,228,235],[1,157,173,186,191],
    [1,143,145,173,174],[0,118,145,151,155],[0,130,150,151,162],[1,135,143,151,173],[0,135,143,185,188],[0,180,184,217,225],
    [0,212,216,256,259],[0,251,255,273,279],[0,269,272,314,316],[0,313,313,367,369],[1,336,347,366,370],[1,322,339,348,348],
    [1,297,298,340,340],[0,285,298,310,332],[0,298,309,325,332],[0,313,324,329,340],[0,312,328,332,341],[0,323,331,338,339],
    [1,321,333,344,344],[0,323,330,344,345],[1,334,338,344,351],[0,338,338,352,361],[0,345,351,365,371],[1,357,358,365,371],
    [1,353,354,359,364],[0,348,354,394,402],[1,348,353,394,400],[1,347,349,354,361],[0,343,349,368,378],[1,344,357,368,369],
    [0,355,356,384,394],[1,364,372,384,392],[0,371,372,403,412],[1,376,382,403,410],[0,370,382,421,425],[0,413,419,437,438],
    [1,400,408,437,440],[1,374,377,409,414],[1,363,376,379,379],[1,357,359,377,391],[1,337,348,359,371],[0,347,348,367,369],
    [1,358,362,367,367],[0,359,362,408,410],[0,407,407,422,434],[1,371,372,422,423],[1,354,369,373,379],[0,357,369,374,380],
    [0,366,374,378,390],[1,363,375,378,388],[1,348,352,376,387],[1,334,335,353,372],[0,330,335,366,376],[1,336,340,367,368],
    [1,304,311,341,349],[1,305,307,312,320],[0,301,306,311,326],[1,288,299,312,316],[0,280,300,344,346],[0,337,343,350,366],
    [0,346,349,380,383],[0,376,378,393,409],[0,376,391,437,445],[0,435,436,442,456],[0,434,441,464,469],[0,452,463,465,473],
    [0,452,464,476,483],[0,470,475,488,497],[1,477,483,488,497],[0,479,484,502,503],[1,487,489,502,508],[1,482,484,490,504],
    [0,477,484,487,492],[1,475,484,487,505],[0,481,484,497,504],[1,465,470,497,504],[0,456,470,472,487],[1,454,461,472,483],
    [0,459,461,519,521],[0,516,518,544,554],[1,474,483,544,592],[1,467,470,484,522],[1,409,409,471,479],[0,392,409,427,428],
    [0,403,426,442,464],[1,384,409,443,449],[0,389,408,423,433],[1,342,361,424,425],[1,338,339,361,376],[1,306,313,339,341],
    [0,312,313,326,350],[0,317,325,347,356],[0,334,347,379,388],[1,361,365,379,423],[0,361,366,417,418],[0,405,415,444,452],
    [1,404,412,444,445],[0,408,412,434,439],[0,404,433,445,446],[1,418,427,445,448],[0,422,426,440,441],[1,415,417,440,443],
    [1,394,397,418,432],[0,397,397,401,419],[0,393,400,420,423],[0,407,419,425,436],[0,414,424,433,438],[1,413,429,433,437],
    [1,413,422,430,435],[1,370,375,423,429],[1,351,356,376,386],[1,343,352,357,360],[1,320,326,353,353],[1,320,321,327,333],
    [0,334,340,343,345],[0,336,342,354,361],[1,343,345,354,368],[0,343,345,347,361],[1,329,335,347,349],[1,324,326,336,346],
    [0,321,326,341,345],[1,313,338,341,346],[0,338,338,365,366],[1,350,360,365,366],[1,349,356,361,382],[0,345,356,378,380],
    [0,373,377,396,412],[1,357,374,396,405],[0,366,374,380,389],[1,352,357,380,389],[1,338,339,358,376],[0,333,339,352,353],
    [0,349,351,358,373],[0,354,357,381,386],[1,371,377,381,394],[0,375,377,391,410],[0,385,390,395,402],[0,388,394,403,415],
    [0,395,402,406,410],[1,398,403,405,410],[0,399,403,407,415],[1,402,405,407,415],[1,388,399,407,416],[1,390,396,400,410],
    [0,386,396,397,407],[0,395,396,411,418],[0,404,410,421,425],[0,417,419,430,434],[0,421,429,435,438],[1,415,429,435,440],
    [0,427,429,440,454],[1,405,418,439,439],[0,412,418,448,449],[1,412,424,448,448],[0,419,424,432,449],[1,406,429,431,436],
    [1,408,411,430,430],[1,392,410,412,420],[0,397,410,413,423],[0,399,412,417,433],[0,416,416,432,445],[0,414,431,438,443],
    [0,417,437,443,446],[0,440,442,448,464],[1,420,423,448,454],[1,393,398,425,425],[0,398,398,424,439],[0,416,423,425,440],
    [1,416,420,426,434],[0,414,420,429,433],[1,406,413,429,434],[1,400,412,414,423],[0,406,412,420,426],[1,405,412,419,428],
    [0,404,412,436,443],[0,421,434,437,454],[0,432,436,439,461],[0,436,438,473,482],[1,450,451,473,486],[1,441,442,451,460],
    [0,426,441,445,458],[0,429,444,485,490],[0,457,484,487,495],[1,440,459,487,487],[0,458,458,530,530],[0,525,529,564,574],
    [1,533,545,564,579],[1,495,523,546,547],[1,503,508,525,532],[0,508,508,537,544],[0,536,536,553,557],[1,526,536,553,554],
    [0,534,536,549,557],[1,527,541,549,556],[1,507,525,542,546],[1,517,523,526,538],[0,510,523,538,544],[1,527,537,539,547],
    [1,522,523,538,561],[1,507,510,524,526],[1,479,483,511,511],[0,475,483,502,512],[1,441,443,502,513],[1,433,435,444,465],
    [1,388,388,436,447],[1,319,323,389,396],[0,323,323,357,379],[0,344,356,365,372],[1,345,359,365,366],[0,356,358,371,386],
    [1,363,372,383,384],[1,371,375,377,381],[0,373,375,381,396],[1,373,379,383,388],[1,349,357,373,384],[1,328,336,358,358],
    [0,321,336,362,366],[0,355,361,381,387],[1,337,341,381,391],[1,302,309,341,350],[1,303,305,310,330],[1,289,295,305,311],
    [1,226,245,296,300],[0,242,245,285,293],[1,264,276,284,302],[0,261,277,293,300],[0,285,291,317,328],[1,291,297,317,320],
    [0,297,297,312,324],[1,260,302,312,316],[1,283,284,303,314],[1,267,269,285,302],[1,239,243,270,277],[0,230,243,266,268],
    [0,262,265,288,304],[1,266,281,288,289],[0,275,281,285,292],[1,269,274,285,292],[1,267,270,275,288],[0,258,269,271,282]
];

const step = 4;    // distance between bars
const top0 = 106;  // y of the first row inside the frame

function rect(x, y, w, h, fill) {
    return `<rect x="${x}" y="${y}" width="${w}" height="${h}" fill="${fill}"/>`;
}

function dashed(x, color) {
    return `<line x1="${x + 0.5}" x2="${x + 0.5}" y1="0" y2="100%" stroke="${color}" stroke-dasharray="3 3"/>`;
}

let out = dashed(359, "#fff") + dashed(743, "#fff") + dashed(1127, "#fff");

bars.forEach(([up, high, bodyTop, bodyBottom, low], i) => {
    const x = i * step - 1;
    const color = up ? "#fff" : "#0000cd";
    out += rect(x, high - top0, 1, low - high, color);
    out += rect(x - 1, bodyTop - top0, 3, bodyBottom - bodyTop, color);
});

// Black vertical line and Fibonacci levels
out += dashed(519, "#000");
out += `<line x1="519.5" y1="173" x2="515" y2="210" stroke="#f00" stroke-dasharray="3 3"/>`;
[["0.0", 504, 170, 173], ["3", 512, 317, 319], ["5", 512, 390, 393], ["6", 512, 426, 429], ["7", 512, 464, 466]].forEach(([label, x, y, tick]) => {
    out += `<text class="fibo" x="${x}" y="${y}">${label}</text>` + rect(516, tick, 4, 1, "#ff0");
});
[[519, 173], [517, 192], [515, 210]].forEach(([x, y]) => {
    out += rect(x - 2, y - 2, 5, 5, "#f00") + rect(x - 1, y - 1, 3, 3, "#fff");
});

// Horizontal levels with their handles
out += rect(0, 399, "100%", 2, "#f00") + rect(0, 472, "100%", 2, "#fff");
out += rect(0, 397, 7, 7, "#f00") + rect(1, 398, 5, 5, "#fff") + rect(0, 470, 7, 7, "#fff");
out += `<svg x="100%" overflow="visible">` + rect(-7, 397, 7, 7, "#f00") + rect(-6, 398, 5, 5, "#fff") + rect(-7, 470, 7, 7, "#fff") + `</svg>`;
out += `<path d="M999 0h9l-4.500 5z" fill="#778899"/><path d="M571 494h9l-4.500-5z" fill="#778899"/>`;
document.getElementById("plot").innerHTML = out;

// Axis labels
const prices = ["1.25590", "1.25510", "1.25430", "1.25350", "1.25270", "1.25190", "1.25110", "1.25030", "1.24950", "1.24870", "1.24790", "1.24710", "1.24630", "1.24550"];
document.getElementById("prices").innerHTML = prices.map(p => `<li>${p}</li>`).join("");

const times = ["18 Jan 2022"];
for (let n = 1; n < 20; n++) {
    const hour = 1 + n * 4;
    const day = 18 + Math.floor(hour / 24);
    times.push(`${day} Jan ${String(hour % 24).padStart(2, "0")}:30`);
}
document.getElementById("times").innerHTML = times.map(t => `<li>${t}</li>`).join("");
```
